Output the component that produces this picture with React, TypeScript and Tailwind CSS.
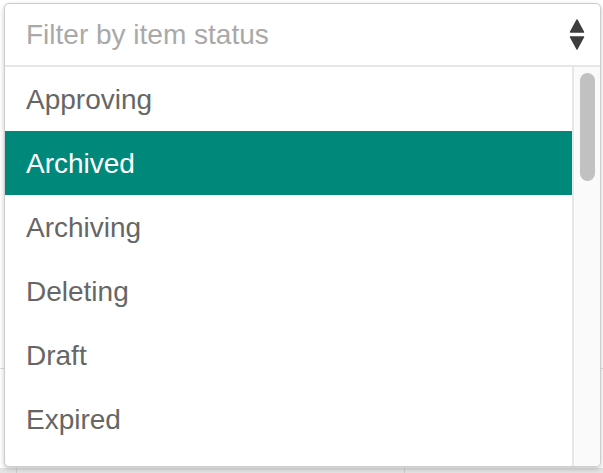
const options = ["Approving", "Archived", "Archiving", "Deleting", "Draft", "Expired"];

function SortArrows() {
  return (
    <svg width="16" height="34" viewBox="0 0 16 34" aria-hidden="true">
      <path
        d="M8 2 L14.5 14 L1.5 14 Z"
        fill="#3d3d3d"
        stroke="#3d3d3d"
        strokeWidth="1.5"
        strokeLinejoin="round"
      />
      <path
        d="M1.5 19 L14.5 19 L8 31 Z"
        fill="#3d3d3d"
        stroke="#3d3d3d"
        strokeWidth="1.5"
        strokeLinejoin="round"
      />
    </svg>
  );
}

export default function App() {
  const selected = "Archived";

  return (
    <div className="relative w-[603px] h-[473px] overflow-hidden bg-white font-['Liberation_Sans',Arial,sans-serif]">
      {/* page content behind the menu */}
      <div className="h-[369px] border-b border-[#dcdcdc]" />
      <div className="h-[99px]" />
      <div className="flex h-[5px] bg-[#e4e4e4]">
        <div className="w-[17px] border-r border-[#cfcfcf]" />
        <div className="w-[388px] border-r border-[#cfcfcf]" />
        <div className="flex-1" />
      </div>

      <div className="absolute left-[4px] top-[3px] flex h-[464px] w-[597px] flex-col overflow-hidden rounded-[5px] border border-[#cdcdcd] bg-white shadow-[0_2px_5px_rgba(0,0,0,0.22)]">
        <div className="flex h-[63px] shrink-0 items-center justify-between border-b-2 border-[#e6e6e6] pl-[21px] pr-[15px]">
          <span className="pt-px text-[28px] text-[#a9a9a9]">Filter by item status</span>
          <SortArrows />
        </div>
        <div className="flex min-h-0 flex-1">
          <ul className="flex-1 overflow-hidden">
            {options.map((option) => (
              <li
                key={option}
                className={
                  option === selected
                    ? "flex h-[64px] items-center bg-[#00897b] pl-[21px] pt-[2px] text-[28px] text-white"
                    : "flex h-[64px] items-center pl-[21px] pt-[2px] text-[28px] text-[#666666]"
                }
              >
                {option}
              </li>
            ))}
          </ul>
          <div className="w-[28px] shrink-0 border-l-2 border-[#e8e8e8] bg-[#fafafa] pl-[6px] pt-[6px]">
            <div className="h-[108px] w-[15px] rounded-full bg-[#c1c1c1]" />
          </div>
        </div>
      </div>
    </div>
  );
}
